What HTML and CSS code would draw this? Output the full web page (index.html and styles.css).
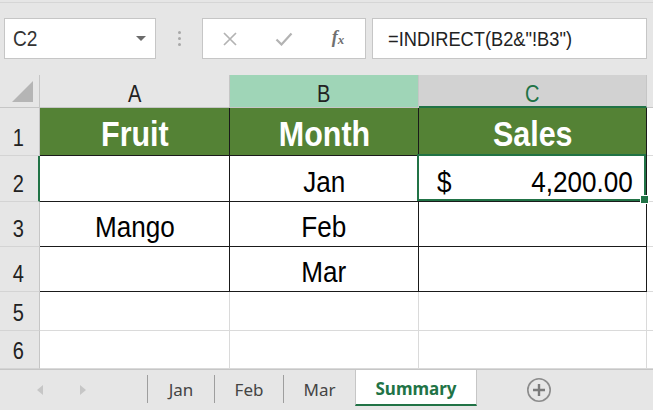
FILE: index.html
```html
<!DOCTYPE html>
<html>
<head>
<meta charset="utf-8">
<title>Summary</title>
<link rel="stylesheet" href="styles.css">
</head>
<body>
<div class="app">
  <div class="topline"></div>
  <div class="fbar">
    <div class="namebox"><span class="ref sq sq-l">C2</span><span class="dd"></span></div>
    <div class="grip"><i></i><i></i><i></i></div>
    <div class="btns">
      <span class="btn"><svg width="16" height="14" viewBox="0 0 16 14"><path d="M2 1 L14 13 M14 1 L2 13" stroke="#b3b3b3" stroke-width="1.7" fill="none"/></svg></span>
      <span class="btn"><svg width="18" height="14" viewBox="0 0 18 14"><path d="M1.5 7.5 L6.5 12.5 L16.5 1.5" stroke="#b3b3b3" stroke-width="2.2" fill="none"/></svg></span>
      <span class="btn fx">f<span class="fxx">x</span></span>
    </div>
    <div class="formula"><span class="sq sq-l">=INDIRECT(B2&amp;"!B3")</span></div>
  </div>

  <div class="sheet">
    <div class="corner"><span class="tri"></span></div>
    <div class="ch"><span class="sq">A</span></div>
    <div class="ch ch-b"><span class="sq">B</span></div>
    <div class="ch ch-sel"><span class="sq">C</span></div>
    <div class="ch ch-d"></div>

    <div class="rh"><span class="sq">1</span></div>
    <div class="c t hd"><span class="sq">Fruit</span></div>
    <div class="c t hd"><span class="sq">Month</span></div>
    <div class="c t hd"><span class="sq">Sales</span></div>
    <div class="c d"></div>

    <div class="rh rh-sel"><span class="sq">2</span></div>
    <div class="c t"></div>
    <div class="c t"><span class="sq">Jan</span></div>
    <div class="c t sel"><span class="sq sq-l">$</span><span class="sq sq-r">4,200.00</span></div>
    <div class="c d"></div>

    <div class="rh"><span class="sq">3</span></div>
    <div class="c t"><span class="sq">Mango</span></div>
    <div class="c t"><span class="sq">Feb</span></div>
    <div class="c t"></div>
    <div class="c d"></div>

    <div class="rh"><span class="sq">4</span></div>
    <div class="c t"></div>
    <div class="c t"><span class="sq">Mar</span></div>
    <div class="c t"></div>
    <div class="c d"></div>

    <div class="rh"><span class="sq">5</span></div>
    <div class="c"></div>
    <div class="c"></div>
    <div class="c"></div>
    <div class="c d"></div>

    <div class="rh"><span class="sq">6</span></div>
    <div class="c"></div>
    <div class="c"></div>
    <div class="c"></div>
    <div class="c d"></div>
  </div>

  <div class="tabs">
    <div class="nav"><span class="arr-l"></span><span class="arr-r"></span></div>
    <div class="tab w1">Jan</div>
    <div class="tab w2">Feb</div>
    <div class="tab w3">Mar</div>
    <div class="tab-active">Summary</div>
    <div class="plus"><svg width="26" height="26" viewBox="0 0 26 26"><circle cx="13" cy="13" r="11.2" stroke="#8c8c8c" stroke-width="1.6" fill="none"/><path d="M13 7 V19 M7 13 H19" stroke="#7a7a7a" stroke-width="2.4"/></svg></div>
  </div>
</div>
</body>
</html>
```

FILE: styles.css
```css
* { box-sizing: border-box; margin: 0; padding: 0; }
html, body { width: 653px; height: 410px; overflow: hidden; background: #e6e6e6; }
body { font-family: "Liberation Sans", Arial, sans-serif; color: #000; }

.app { width: 653px; height: 410px; display: flex; flex-direction: column; }

/* narrow rendering of the sheet font */
.sq { display: inline-block; transform: scaleX(0.87); white-space: nowrap; }
.sq-l { transform-origin: left center; }
.sq-r { transform-origin: right center; }

.topline { height: 3px; border-bottom: 1px solid #d6d6d6; }

/* formula bar */
.fbar { height: 72px; display: flex; align-items: flex-start; padding-top: 15px; padding-left: 4px; }
.namebox { width: 152px; height: 41px; background: #fff; border: 1px solid #c6c6c6; display: flex; align-items: center; padding-left: 8px; padding-right: 9px; }
.ref { font-size: 22px; color: #333; }
.dd { margin-left: auto; width: 0; height: 0; border-left: 5px solid transparent; border-right: 5px solid transparent; border-top: 5px solid #6b6b6b; }
.grip { width: 46px; height: 41px; display: flex; flex-direction: column; align-items: center; justify-content: center; gap: 3px; }
.grip i { display: block; width: 3px; height: 3px; border-radius: 50%; background: #a8a8a8; }
.btns { width: 164px; height: 41px; background: #fff; border: 1px solid #c6c6c6; display: flex; }
.btn { width: 54px; height: 39px; display: flex; align-items: center; justify-content: center; }
.fx { font-family: "Liberation Serif", "Times New Roman", serif; font-style: italic; font-weight: bold; font-size: 18px; color: #707070; padding-bottom: 3px; }
.fxx { font-size: 13px; position: relative; top: 3px; }
.formula { margin-left: 6px; width: 275px; height: 41px; background: #fff; border: 1px solid #c6c6c6; display: flex; align-items: center; padding-left: 15px; font-size: 21px; color: #222; }

/* sheet */
.sheet { display: grid; grid-template-columns: 40px 190px 189px 228px 1fr; grid-template-rows: 33px 48px 46px 45px 45px 39px 38px; background: #fff; }
.corner { background: #e6e6e6; border-right: 1px solid #c6c6c6; border-bottom: 1px solid #c6c6c6; display: flex; align-items: flex-end; justify-content: flex-end; padding-right: 6px; padding-bottom: 5px; }
.tri { width: 0; height: 0; border-left: 21px solid transparent; border-bottom: 21px solid #b5b5b5; }
.ch { background: #e6e6e6; border-right: 1px solid #c6c6c6; border-bottom: 1px solid #c6c6c6; display: flex; align-items: flex-end; justify-content: center; font-size: 23px; line-height: 1.15; color: #222; padding-bottom: 0; }
.ch-b { background: #9fd5b7; }
.ch-sel { background: #d2d2d2; color: #217346; border-bottom: 2px solid #217346; }
.ch-sel .sq { position: relative; top: 1px; }
.ch-d { border-right: none; }
.rh { background: #e6e6e6; border-right: 1px solid #c6c6c6; border-bottom: 1px solid #d4d4d4; display: flex; align-items: flex-end; justify-content: center; font-size: 23px; line-height: 1.15; color: #222; padding-bottom: 4px; padding-right: 3px; }
.rh-sel { border-right: 2px solid #217346; padding-right: 2px; }

.c { border-right: 1px solid #dadada; border-bottom: 1px solid #dadada; display: flex; align-items: flex-end; justify-content: center; font-size: 30px; padding-bottom: 2px; line-height: 1.15; }
.t { border-right-color: #1a1a1a; border-bottom-color: #1a1a1a; }
.hd { background: #548235; color: #fff; font-weight: bold; font-size: 35px; padding-bottom: 1px; }
.d { border-right: none; }
.sel { position: relative; z-index: 2; justify-content: space-between; padding-left: 18px; padding-right: 13px; }
.sel::after { content: ""; position: absolute; left: -2px; top: -2px; right: 0; bottom: 0; border: 2px solid #217346; }
.sel::before { content: ""; position: absolute; right: -3px; bottom: -3px; width: 7px; height: 7px; background: #217346; border: 1px solid #fff; z-index: 3; }

/* tabs */
.tabs { height: 41px; border-top: 1px solid #c6c6c6; display: flex; align-items: flex-start; font-family: "Noto Sans", "Open Sans", sans-serif; }
.nav { width: 147px; height: 40px; display: flex; align-items: center; padding-left: 37px; }
.arr-l { width: 0; height: 0; border-top: 5px solid transparent; border-bottom: 5px solid transparent; border-right: 6px solid #c6c6c6; }
.arr-r { margin-left: 37px; width: 0; height: 0; border-top: 5px solid transparent; border-bottom: 5px solid transparent; border-left: 6px solid #c6c6c6; }
.tab { margin-top: 5px; height: 28px; border-left: 1px solid #9e9e9e; display: flex; align-items: center; justify-content: center; font-size: 17px; color: #444; }
.w1 { width: 67px; }
.w2 { width: 69px; }
.w3 { width: 72px; }
.tab-active { margin-top: -1px; width: 122px; height: 37px; background: #fff; border: 1px solid #c6c6c6; border-bottom: 2px solid #217346; display: flex; align-items: center; justify-content: center; font-size: 17px; font-weight: bold; color: #217346; padding-top: 2px; }
.plus { margin-left: 49px; margin-top: 7px; width: 26px; height: 26px; }
.plus svg { display: block; }
```
